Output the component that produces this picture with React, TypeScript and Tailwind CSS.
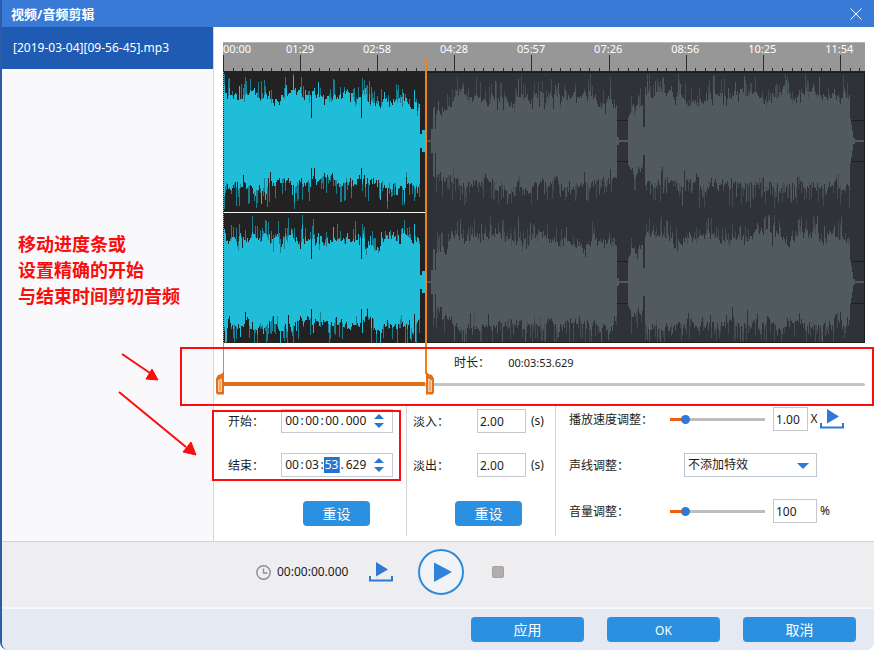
import { useState } from 'react'
import type { ReactNode } from 'react'
import { clsx } from 'clsx'

const RULER_LABELS = ['00:00', '01:29', '02:58', '04:28', '05:57', '07:26', '08:56', '10:25', '11:54']

const WAVE_WIDTH = 642
const WAVE_HEIGHT = 271
const SPLIT = 202

// Small seeded generator so the waveform is the same on every render
const createRandom = (seed: number) => {
  let s = seed
  return () => {
    s = (s * 1664525 + 1013904223) % 4294967296
    return s / 4294967296
  }
}

// Loudness envelope of the recording, in pixels from the centre line
const envelope = (x: number) => {
  if (x < 2) return 52
  if (x < 197) return 43
  if (x < 199) return 7
  if (x < 202) return 11
  if (x < 208) return 1
  if (x < 213) return x === 210 || x === 211 ? 34 : 12
  if (x < 230) return 30 + (x - 213) * 0.7
  if (x < 389) return 43
  if (x < 394) return 41 - (x - 389) * 2
  if (x < 396) return 4
  if (x < 405) return 0.6
  if (x < 412) return 24 + (x - 405) * 1.8
  if (x < 420) return 37 - (x - 412) * 0.8
  if (x < 422) return 14
  if (x < 627) return 44
  if (x < 630) return 22 - (x - 627) * 6
  if (x < 632) return 3
  return 0.6
}

const buildWave = (seed: number, center: number) => {
  const random = createRandom(seed)
  let body = ''
  let shade = ''
  let upper = 0
  let lower = 0
  for (let x = 1; x < WAVE_WIDTH; x++) {
    const base = envelope(x)
    let up = base
    let down = base
    let upTip = 0
    let downTip = 0
    if (base > 28) {
      upper = upper * 0.78 + (random() - 0.5) * 9
      lower = lower * 0.78 + (random() - 0.5) * 9
      up += upper + random() * 4 - 2
      down += lower + random() * 4 - 2
      if (random() < 0.12) up += random() * 17
      if (random() < 0.12) down += random() * 17
      if (random() < 0.34) upTip = random() * 18
      if (random() < 0.34) downTip = random() * 20
      if (random() < 0.09) up -= random() * 12
      if (random() < 0.09) down -= random() * 12
    }
    if (x === 88 || x === 138) {
      up = 23
      down = 27
      upTip = 0
      downTip = 0
    }
    up = Math.min(up, 65)
    down = Math.min(down, 66)
    const top = Math.min(up + upTip, 67)
    const bottom = Math.min(down + downTip, 68)
    body += `M${x} ${(center - up).toFixed(1)}h1V${(center + down).toFixed(1)}h-1z`
    shade += `M${x} ${(center - top).toFixed(1)}h1V${(center + bottom).toFixed(1)}h-1z`
  }
  return { body, shade }
}

const TRACKS = [buildWave(1904, 69), buildWave(5645, 210)]

const Waveform = () => (
  <svg
    className="block h-[271px] w-full"
    viewBox={`0 0 ${WAVE_WIDTH} ${WAVE_HEIGHT}`}
    preserveAspectRatio="none"
    role="img"
    aria-label="波形"
  >
    <defs>
      <clipPath id="selected">
        <rect x="0" y="0" width={SPLIT} height={WAVE_HEIGHT} />
      </clipPath>
      <clipPath id="rest">
        <rect x={SPLIT} y="0" width={WAVE_WIDTH - SPLIT} height={WAVE_HEIGHT} />
      </clipPath>
    </defs>
    <rect width={WAVE_WIDTH} height={WAVE_HEIGHT} fill="#2f3337" />
    <rect width={SPLIT} height={WAVE_HEIGHT} fill="#222222" />
    {/* level guides, visible only in the silent gaps */}
    {[48, 89, 189, 231].map((y) => (
      <path key={y} d={`M394 ${y}.5h11M628 ${y}.5h14`} stroke="#1c1f22" />
    ))}
    {TRACKS.map((track, index) => (
      <g key={index} shapeRendering="crispEdges">
        <path d={track.shade} fill="#1b7d90" clipPath="url(#selected)" />
        <path d={track.body} fill="#1fbdd8" clipPath="url(#selected)" />
        <path d={track.shade} fill="#434b4c" clipPath="url(#rest)" />
        <path d={track.body} fill="#515b5f" clipPath="url(#rest)" />
      </g>
    ))}
    <path d={`M1 140.5H${SPLIT}`} stroke="#f4f4f4" />
    <path d="M202 0.5H642M641.5 0V271M202 270.5H642" stroke="#1b1e21" />
    <path d="M0.5 0V271" stroke="#d98a6a" strokeDasharray="1 1" />
  </svg>
)

const Ruler = () => {
  const ticks = Array.from({ length: 67 }, (_, i) => ({ x: i * 9.64, major: i % 8 === 0 }))
  return (
    <div className="relative h-[30px] overflow-hidden border-t border-[#b5b5b5] bg-[#979797]">
      <svg
        className="absolute inset-0 h-full w-full"
        viewBox={`0 0 ${WAVE_WIDTH} 29`}
        preserveAspectRatio="none"
        shapeRendering="crispEdges"
        aria-hidden="true"
      >
        {ticks.map(({ x, major }) => (
          <rect key={x} x={x} y={major ? 12 : 25} width="1" height="18" fill="#2c2c2c" />
        ))}
        <rect y="28" width={WAVE_WIDTH} height="1" fill="#222222" />
      </svg>
      <div className="relative flex text-[11px] leading-3 text-white">
        {RULER_LABELS.map((label, index) => (
          <div key={label} className="w-[12%] shrink-0">
            <span className={clsx('inline-block', index > 0 && '-translate-x-1/2')}>{label}</span>
          </div>
        ))}
      </div>
    </div>
  )
}

const Handle = ({ flip }: { flip?: boolean }) => (
  <svg className={clsx('block', flip && '-scale-x-100')} width="10" height="24" viewBox="0 0 10 24" aria-hidden="true">
    <path d="M9 0V23.5H2.5L1 22V7.500L3 4L6.500 3Z" fill="#e2701a" />
    <path d="M3.500 9.500L6.500 8V20.500H3.500Z" fill="#f3a769" stroke="#fbe3cf" strokeWidth="0.8" />
  </svg>
)

const RangeBar = () => {
  const [range, setRange] = useState({ start: 0, end: 314 })
  const thumb =
    'pointer-events-none absolute inset-x-0 top-7 h-6 w-full opacity-0 [&::-webkit-slider-thumb]:pointer-events-auto'
  return (
    <div className="relative h-[63px]">
      <p className="absolute left-[36%] top-3 flex items-center gap-[18px] text-xs leading-4">
        <span>时长：</span>
        <span className="text-[11px]">00:03:53.629</span>
      </p>
      <div className="absolute inset-x-0 top-10 h-[3px] rounded-full bg-[#c6c6c8]" />
      <div
        className="absolute top-[39px] h-1 bg-[#e2701a]"
        style={{ left: `${range.start / 10}%`, width: `${(range.end - range.start) / 10}%` }}
      />
      <div
        className="absolute top-0 h-8 border-l border-[#f0821e]"
        style={{ left: `${range.start / 10}%` }}
      />
      <div
        className="absolute -top-[286px] bottom-8 border-l-2 border-[#f0821e]"
        style={{ left: `${range.end / 10}%` }}
      />
      <div className="absolute top-7 -ml-2" style={{ left: `${range.start / 10}%` }}>
        <Handle />
      </div>
      <div className="absolute top-7" style={{ left: `${range.end / 10}%` }}>
        <Handle flip />
      </div>
      <input
        type="range"
        aria-label="开始"
        max={1000}
        value={range.start}
        onChange={(e) => setRange({ ...range, start: Math.min(Number(e.target.value), range.end) })}
        className={thumb}
      />
      <input
        type="range"
        aria-label="结束"
        max={1000}
        value={range.end}
        onChange={(e) => setRange({ ...range, end: Math.max(Number(e.target.value), range.start) })}
        className={thumb}
      />
      {/* callout frame around the progress bar */}
      <div className="pointer-events-none absolute -left-[43px] -right-[9px] bottom-0 top-1 border-2 border-[#fb0d0d]" />
    </div>
  )
}

const Button = ({ children, className }: { children: ReactNode; className?: string }) => (
  <button
    type="button"
    className={clsx('h-[25px] rounded-[4px] bg-[#2c90e0] text-sm leading-5 text-white hover:bg-[#3a9cea]', className)}
  >
    {children}
  </button>
)

const ExportIcon = () => (
  <svg width="24" height="20" viewBox="0 0 24 20" fill="none" aria-hidden="true">
    <path d="M7 0L19 7.500L7 14.500Z" fill="#2f78d6" />
    <path d="M1 14V18.500H23V14" stroke="#2f78d6" strokeWidth="2" />
  </svg>
)

const TimeField = ({ label, parts, active }: { label: string; parts: string[]; active?: number }) => (
  <div className="flex h-6 items-center text-xs">
    <span className="w-[53px] pt-0.5">{label}：</span>
    <div className="flex h-6 w-28 items-center border border-[#c3cad3] bg-white pl-0.5" role="group" aria-label={label}>
      {parts.map((part, index) => (
        <div key={index} className="flex items-center">
          {index > 0 && <span className="w-1 text-center leading-4">{index === 3 ? '.' : ':'}</span>}
          <input
            aria-label={`${label} ${index + 1}`}
            defaultValue={part}
            className={clsx(
              'h-4 p-0 text-center leading-4 outline-none',
              index === 3 ? 'w-6' : 'w-4',
              index === active && 'border-r border-[#e2701a] bg-[#2474d2] text-white'
            )}
          />
        </div>
      ))}
      <div className="ml-[6px] flex flex-col gap-1">
        <button type="button" aria-label="增加">
          <svg className="block" width="10" height="5" viewBox="0 0 10 5">
            <path d="M0 5L5 0L10 5Z" fill="#2a75d0" />
          </svg>
        </button>
        <button type="button" aria-label="减少">
          <svg className="block" width="10" height="5" viewBox="0 0 10 5">
            <path d="M0 0L5 5L10 0Z" fill="#2a75d0" />
          </svg>
        </button>
      </div>
    </div>
  </div>
)

const FadeField = ({ id, label }: { id: string; label: string }) => (
  <div className="flex h-6 items-center text-xs">
    <label htmlFor={id} className="w-16 pt-0.5">
      {label}：
    </label>
    <input id={id} defaultValue="2.00" className="h-6 w-[49px] border border-[#c3c8d0] bg-white px-0.5" />
    <span className="ml-[5px]">(s)</span>
  </div>
)

const MiniSlider = ({ id }: { id: string }) => {
  const [value, setValue] = useState(13)
  return (
    <input
      id={id}
      type="range"
      value={value}
      onChange={(e) => setValue(Number(e.target.value))}
      style={{ backgroundImage: `linear-gradient(to right, #ec5f10 ${value}%, #bdbdbd ${value}%)` }}
      className="h-[3px] w-[95px] appearance-none [&::-webkit-slider-thumb]:size-[9px] [&::-webkit-slider-thumb]:appearance-none [&::-webkit-slider-thumb]:rounded-full [&::-webkit-slider-thumb]:bg-[#2f78d6]"
    />
  )
}

const Controls = () => (
  <div className="relative flex h-[135px] pb-[5px]">
    <div className="flex w-[193px] flex-col gap-5 border-r border-[#d0d2d6] pl-[14px] pt-[3px]">
      <TimeField label="开始" parts={['00', '00', '00', '000']} />
      <TimeField label="结束" parts={['00', '03', '53', '629']} active={2} />
      <Button className="ml-[75px] mt-1 w-[67px] shrink-0">重设</Button>
    </div>
    <div className="flex w-[149px] flex-col gap-5 border-r border-[#d0d2d6] pl-[6px] pt-[3px]">
      <FadeField id="fade-in" label="淡入" />
      <FadeField id="fade-out" label="淡出" />
      <Button className="ml-[42px] mt-1 w-[67px] shrink-0">重设</Button>
    </div>
    <div className="flex flex-1 flex-col gap-[22px] pl-[13px] pt-px text-xs">
      <div className="flex h-6 items-center">
        <label htmlFor="speed" className="w-[101px] pt-0.5">
          播放速度调整：
        </label>
        <MiniSlider id="speed" />
        <input
          aria-label="播放速度"
          defaultValue="1.00"
          className="ml-2 h-6 w-[35px] border border-[#c3c8d0] bg-white px-0.5"
        />
        <span className="w-3 text-center">X</span>
        <button type="button" aria-label="预览">
          <ExportIcon />
        </button>
      </div>
      <div className="flex h-6 items-center">
        <label htmlFor="voice" className="w-[115px] pt-0.5">
          声线调整：
        </label>
        <div className="relative">
          <select
            id="voice"
            className="h-6 w-[133px] appearance-none border border-[#bcc5d2] bg-white pl-[3px] pr-6 leading-4"
          >
            <option>不添加特效</option>
          </select>
          <svg
            className="pointer-events-none absolute right-2 top-[10px]"
            width="12"
            height="6"
            viewBox="0 0 12 6"
            aria-hidden="true"
          >
            <path d="M0 0H12L6 6Z" fill="#2f78d6" />
          </svg>
        </div>
      </div>
      <div className="flex h-6 items-center">
        <label htmlFor="volume" className="w-[101px] pt-0.5">
          音量调整：
        </label>
        <MiniSlider id="volume" />
        <input
          aria-label="音量"
          defaultValue="100"
          className="ml-2 h-6 w-[44px] border border-[#c3c8d0] bg-white px-0.5"
        />
        <span className="ml-[3px]">%</span>
      </div>
    </div>
    {/* callout frame around the start and end fields */}
    <div className="pointer-events-none absolute -left-[2px] top-1 h-[71px] w-[189px] border-2 border-[#fb0d0d]" />
  </div>
)

const Sidebar = () => (
  <aside className="flex w-[212px] shrink-0 flex-col border-r border-[#d3d5d9] bg-[#f9f9fb]">
    <button type="button" className="h-[42px] bg-[#1f5bb2] pl-[11px] text-left text-xs text-white">
      [2019-03-04][09-56-45].mp3
    </button>
    <p className="mt-[162px] pl-4 text-lg font-bold leading-[26px] text-[#fb0d0d]">
      移动进度条或
      <br />
      设置精确的开始
      <br />
      与结束时间剪切音频
    </p>
    <svg className="ml-[114px] mt-11" width="84" height="106" viewBox="0 0 84 106" aria-hidden="true">
      <g stroke="#fb0d0d" strokeWidth="2" fill="#fb0d0d">
        <path d="M6 1L34 20" />
        <path d="M42 27L30 26L36 16Z" strokeWidth="1" />
        <path d="M3 39L70 94" />
        <path d="M80 102L67 99L75 89Z" strokeWidth="1" />
      </g>
    </svg>
  </aside>
)

const Transport = () => (
  <div className="flex h-[66px] items-center border-t border-[#cfd6df] bg-[#eeeef0] pb-[5px] pl-[254px]">
    <svg width="15" height="15" viewBox="0 0 15 15" fill="none" stroke="#8f8f92" aria-hidden="true">
      <circle cx="7.500" cy="7.500" r="6.700" strokeWidth="1.400" />
      <path d="M7.500 3.500V8H11.500" strokeWidth="1.300" />
    </svg>
    <span className="ml-[6px] w-[92px] text-xs">00:00:00.000</span>
    <button type="button" aria-label="预览片段">
      <ExportIcon />
    </button>
    <button type="button" aria-label="播放" className="ml-6">
      <svg width="48" height="48" viewBox="0 0 48 48" aria-hidden="true">
        <circle cx="24" cy="24" r="22" fill="#f1f3f7" stroke="#2c8cdc" strokeWidth="2" />
        <path d="M17 14.500L35 24L17 34Z" fill="#2f84da" />
      </svg>
    </button>
    <button type="button" aria-label="停止" className="ml-[27px] size-3 rounded-[2px] border border-[#a5a1a1] bg-[#b3adad]" />
  </div>
)

export default function App() {
  return (
    <div className="flex min-h-screen flex-col overflow-hidden rounded-b-lg border-l-2 border-[#2c5ca8] bg-white font-['Noto_Sans','Noto_Sans_CJK_SC',sans-serif] text-[#1c1c20]">
      <header className="flex h-[27px] items-center justify-between bg-[#387ad6] pl-[9px] pr-3 text-white">
        <h1 className="text-[13px] font-bold leading-5">视频/音频剪辑</h1>
        <button type="button" aria-label="关闭">
          <svg className="block" width="12" height="12" viewBox="0 0 12 12" stroke="currentColor">
            <path d="M0.5 0.5L11.500 11.500M11.500 0.5L0.5 11.500" />
          </svg>
        </button>
      </header>
      <div className="flex flex-1">
        <Sidebar />
        <main className="min-w-0 flex-1">
          <section className="px-[9px] pt-[15px]">
            <Ruler />
            <Waveform />
            <RangeBar />
          </section>
          <Controls />
        </main>
      </div>
      <Transport />
      <footer className="flex h-[43px] items-start justify-end gap-[23px] border-t-2 border-[#f6f7fa] bg-[#e4e9f2] pr-[18px] pt-2">
        <Button className="w-[113px]">应用</Button>
        <Button className="w-[113px]">
          <span className="text-xs">OK</span>
        </Button>
        <Button className="w-[113px]">取消</Button>
      </footer>
    </div>
  )
}
